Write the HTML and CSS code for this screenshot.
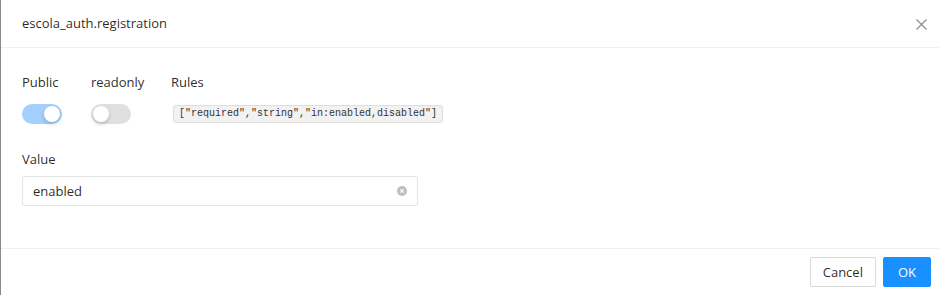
FILE: index.html
```html
<!DOCTYPE html>
<html>
<head>
<meta charset="utf-8">
<link rel="stylesheet" href="styles.css">
</head>
<body>
<div class="modal">
  <div class="modal-header">
    <div class="modal-title">escola_auth.registration</div>
    <button class="modal-close" aria-label="Close">
      <svg width="11" height="11" viewBox="0 0 11 11"><path d="M0.5 0.5L10.5 10.5M10.5 0.5L0.5 10.5" stroke="#8c8c8c" stroke-width="1.2" fill="none"/></svg>
    </button>
  </div>
  <div class="modal-body">
    <div class="field-row">
      <div class="field">
        <div class="label">Public</div>
        <span class="switch switch-on"><span class="knob"></span></span>
      </div>
      <div class="field">
        <div class="label">readonly</div>
        <span class="switch"><span class="knob"></span></span>
      </div>
      <div class="field">
        <div class="label">Rules</div>
        <code class="code">["required","string","in:enabled,disabled"]</code>
      </div>
    </div>
    <div class="field value-field">
      <div class="label">Value</div>
      <div class="input">
        <span class="input-text">enabled</span>
        <span class="clear">
          <svg width="10" height="10" viewBox="0 0 10 10"><circle cx="5" cy="5" r="5" fill="#bfbfbf"/><path d="M3.3 3.3L6.7 6.7M6.7 3.3L3.3 6.7" stroke="#fff" stroke-width="1.1"/></svg>
        </span>
      </div>
    </div>
  </div>
  <div class="modal-footer">
    <button class="btn">Cancel</button>
    <button class="btn btn-primary">OK</button>
  </div>
</div>
</body>
</html>
```

FILE: styles.css
```css
html, body {
  margin: 0;
  padding: 0;
  background: #fff;
}
body {
  font-family: "Open Sans", "Noto Sans", sans-serif;
  font-size: 13px;
  color: rgba(0, 0, 0, 0.85);
}
.modal {
  width: 939px;
  height: 295px;
  box-sizing: border-box;
  border-left: 1px solid #8a8a8a;
  display: flex;
  flex-direction: column;
}
.modal-header {
  height: 48px;
  box-sizing: border-box;
  border-bottom: 1px solid #f0f0f0;
  display: flex;
  align-items: center;
  justify-content: space-between;
  padding: 0 12px 0 21px;
}
.modal-title {
  font-size: 13px;
  line-height: 20px;
  padding-bottom: 1px;
}
.modal-close {
  border: 0;
  background: none;
  padding: 0;
  width: 11px;
  height: 11px;
  display: flex;
  margin-top: 1px;
}
.modal-body {
  flex: 1;
  padding: 23px 21px 0;
}
.field-row {
  display: grid;
  grid-template-columns: 40px 51px auto;
  column-gap: 29px;
  justify-content: start;
}
.field {
  display: flex;
  flex-direction: column;
  align-items: flex-start;
}
.label {
  line-height: 22px;
  margin-bottom: 11px;
  white-space: nowrap;
}
.switch {
  position: relative;
  display: inline-block;
  width: 40px;
  height: 20px;
  border-radius: 10px;
  background: #e0e0e0;
}
.switch-on {
  background: #a3d0fd;
}
.knob {
  position: absolute;
  top: 2px;
  left: 2px;
  width: 16px;
  height: 16px;
  border-radius: 50%;
  background: #fff;
  box-shadow: 0 2px 4px rgba(0, 35, 11, 0.2);
}
.switch-on .knob {
  left: 22px;
}
.code {
  margin: 1px 0 0 2px;
  font-family: "Liberation Mono", "DejaVu Sans Mono", monospace;
  font-size: 10px;
  line-height: 16px;
  padding: 0 5px;
  background: #f2f2f2;
  border: 1px solid #dedede;
  border-radius: 3px;
  color: #333;
}
.value-field {
  margin-top: 24px;
}
.value-field .label {
  margin-bottom: 6px;
}
.input {
  width: 396px;
  height: 30px;
  box-sizing: border-box;
  border: 1px solid #e5e5e5;
  border-radius: 2px;
  display: flex;
  align-items: center;
  justify-content: space-between;
  padding: 0 10px 0 10px;
  font-size: 13px;
}
.clear {
  display: flex;
}
.modal-footer {
  height: 47px;
  box-sizing: border-box;
  border-top: 1px solid #f0f0f0;
  display: flex;
  justify-content: flex-end;
  align-items: center;
  gap: 7px;
  padding: 0 8px 0 0;
}
.btn {
  font-family: inherit;
  font-size: 13px;
  height: 30px;
  padding: 0 12px;
  border: 1px solid #d9d9d9;
  background: #fff;
  border-radius: 2px;
  color: rgba(0, 0, 0, 0.85);
}
.btn-primary {
  background: #1890ff;
  border-color: #1890ff;
  color: #fff;
  padding: 0 14px;
}
```
